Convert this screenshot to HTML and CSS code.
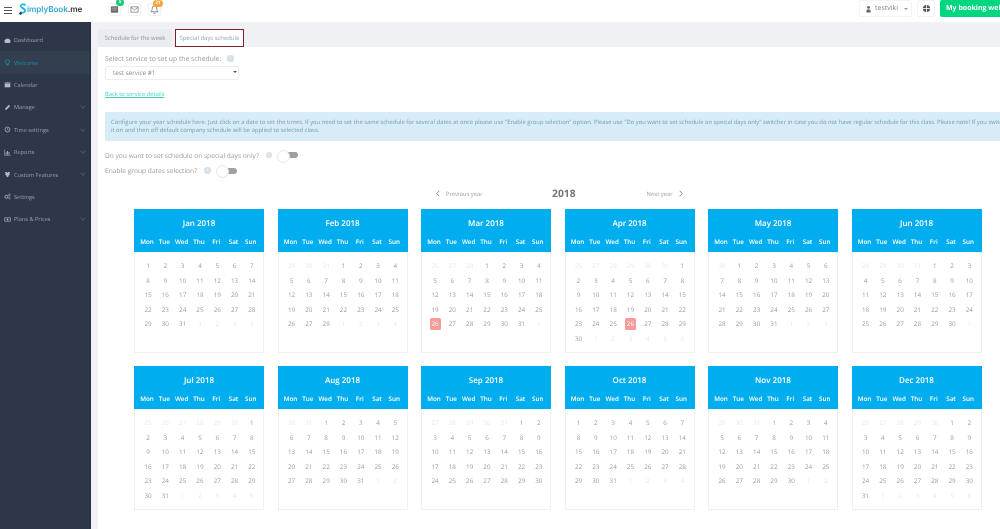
FILE: index.html
```html
<!DOCTYPE html>
<html lang="en">
<head>
<meta charset="utf-8">
<title>SimplyBook.me</title>
<link rel="stylesheet" href="styles.css">
</head>
<body>
<div class="app">
  <header class="top">
    <div class="burger"><span></span><span></span><span></span></div>
    <div class="logo"><svg class="logo-mark" viewBox="0 0 8 12"><path d="M6.500 2.200C5.600 1.200 2 1 1.600 3c-.4 2 4.600 2.300 4.600 4.600C6.200 9.600 3 10.400 1.200 8.800" fill="none" stroke="#19b5ee" stroke-width="1.800"/><circle cx="1.500" cy="10.500" r="1.200" fill="#222"/></svg><span class="logo-text">implyBook<b>.me</b></span></div>
    <div class="top-icons">
      <div class="ibox"><svg viewBox="0 0 10 10"><path d="M1 1.500h8v7H1z" fill="#666"/><path d="M2 3.500h6M2 5.500h6" stroke="#ddd" stroke-width=".6"/></svg><span class="badge green">5</span></div>
      <div class="ibox"><svg viewBox="0 0 10 10"><path d="M1 2h8v6H1zM1 2.500l4 3 4-3" fill="none" stroke="#777" stroke-width=".8"/></svg></div>
      <div class="ibox"><svg viewBox="0 0 10 10"><path d="M5 1a2.500 2.500 0 0 0-2.500 2.500c0 2.500-1 3.500-1.500 4h8c-.5-.5-1.500-1.500-1.500-4A2.500 2.500 0 0 0 5 1zM4 8.500a1 1 0 0 0 2 0" fill="none" stroke="#666" stroke-width=".8"/></svg><span class="badge orange">21</span></div>
    </div>
    <div class="top-right">
      <div class="user"><svg viewBox="0 0 10 10"><circle cx="5" cy="2.800" r="2" fill="#666"/><path d="M1.800 10c0-3 1-4.500 3.200-4.500S8.200 7 8.200 10z" fill="#666"/></svg><span>testviki</span><i class="caret"></i></div>
      <div class="globe"><svg viewBox="0 0 10 10"><circle cx="5" cy="5" r="4" fill="#555"/><path d="M1 5h8M5 1v8" stroke="#fff" stroke-width=".9"/></svg></div>
      <div class="book">My booking website</div>
    </div>
  </header>
  <div class="body">
    <nav class="side">
      <a class="item"><svg viewBox="0 0 10 10"><path d="M1 8.500V4.500L3 2.500h4l2 2v4z" fill="#b5bcc4"/></svg>Dashboard</a>
      <a class="item active"><svg viewBox="0 0 10 10"><path d="M5 .8a2.800 2.800 0 0 0-1.500 5.200v1.500h3V6A2.800 2.800 0 0 0 5 .8zM3.800 8.500h2.400" fill="none" stroke="#0f9ccb" stroke-width="1"/></svg>Welcome</a>
      <a class="item"><svg viewBox="0 0 10 10"><path d="M1 2h8v7H1z" fill="#b5bcc4"/><path d="M1 3.800h8M3 1v2M7 1v2" stroke="#2d3748" stroke-width=".6"/></svg>Calendar</a>
      <a class="item more"><svg viewBox="0 0 10 10"><path d="M1.500 8.500l.7-2.500L7 1.200 8.800 3 4 7.800z" fill="#b5bcc4"/></svg>Manage</a>
      <a class="item more"><svg viewBox="0 0 10 10"><circle cx="5" cy="5" r="3.500" fill="none" stroke="#b5bcc4" stroke-width="1.100"/><path d="M5 3v2.200h1.800" fill="none" stroke="#b5bcc4" stroke-width=".8"/></svg>Time settings</a>
      <a class="item more"><svg viewBox="0 0 10 10"><path d="M1 1v8h8.500" fill="none" stroke="#b5bcc4" stroke-width=".8"/><path d="M2.500 5h1.200v3H2.500zM4.500 3h1.200v5H4.500zM6.500 4.200h1.200V8H6.500z" fill="#b5bcc4"/></svg>Reports</a>
      <a class="item more"><svg viewBox="0 0 10 10"><path d="M1.500 1.500h2.500L5 2.800l1-1.300h2.500L7.500 4.500 9 5.500 6.500 6.500V8L5 9 3.500 8V6.500L1 5.500l1.500-1z" fill="#b5bcc4"/></svg>Custom Features</a>
      <a class="item"><svg viewBox="0 0 10 10"><circle cx="3.500" cy="5.500" r="2.200" fill="none" stroke="#b5bcc4" stroke-width="1.200"/><circle cx="7.800" cy="2.800" r="1.200" fill="none" stroke="#b5bcc4" stroke-width=".9"/><circle cx="7.800" cy="7.500" r="1" fill="none" stroke="#b5bcc4" stroke-width=".8"/></svg>Settings</a>
      <a class="item more"><svg viewBox="0 0 10 10"><path d="M.8 2.500h8.400v5H.8z" fill="none" stroke="#b5bcc4" stroke-width=".9"/><circle cx="5" cy="5" r="1.300" fill="#b5bcc4"/></svg>Plans &amp; Prices</a>
    </nav>
    <main class="main">
      <div class="tabs">
        <div class="tab">Schedule for the week</div>
        <div class="tab current">Special days schedule</div>
      </div>
      <section class="panel">
        <label class="lead">Select service to set up the schedule:<i class="info">i</i></label>
        <div class="select">test service #1<i class="arrow"></i></div>
        <a class="back">Back to service details</a>
        <div class="alert">Configure your year schedule here. Just click on a date to set the times. If you need to set the same schedule for several dates at once please use "Enable group selection" option. Please use "Do you want to set schedule on special days only" switcher in case you do not have regular schedule for this class. Please note! If you switch<br>it on and then off default company schedule will be applied to selected class.</div>
        <div class="opt">Do you want to set schedule on special days only?<i class="info">i</i><span class="toggle"></span></div>
        <div class="opt second">Enable group dates selection?<i class="info">i</i><span class="toggle"></span></div>
        <div class="year-nav">
          <a class="nav-link"><svg viewBox="0 0 6 10"><path d="M5 1L1 5l4 4" fill="none" stroke="#66789a" stroke-width="1.300"/></svg>Previous year</a>
          <strong>2018</strong>
          <a class="nav-link">Next year<svg viewBox="0 0 6 10"><path d="M1 1l4 4-4 4" fill="none" stroke="#66789a" stroke-width="1.300"/></svg></a>
        </div>
        <div class="months" id="months"></div>
      </section>
    </main>
  </div>
</div>
<script src="app.js"></script>
</body>
</html>
```
FILE: styles.css
```css
* { box-sizing: border-box; }
html, body { margin: 0; height: 100%; overflow: hidden; }
body { font-family: "Open Sans", sans-serif; color: #888; background: #fff; text-rendering: geometricPrecision; }
.app { width: 1000px; height: 529px; display: flex; flex-direction: column; overflow: hidden; filter: blur(.4px); }

.top { height: 22px; flex: none; display: flex; align-items: flex-start; background: #fff; position: relative; }
.burger { width: 8px; margin: 7px 0 0 4px; display: flex; flex-direction: column; gap: 1.500px; }
.burger span { height: 1.300px; background: #555; }
.logo { display: flex; align-items: center; margin: 3px 0 0 7px; width: 65px; height: 12px; }
.logo-mark { width: 8px; height: 12px; flex: none; }
.logo-text { font-family: "Inter", sans-serif; font-size: 8.200px; font-weight: 600; color: #39a9d8; letter-spacing: -.1px; }
.logo-text b { color: #333; font-weight: 600; }
.top-icons { display: flex; gap: 7px; margin: 3px 0 0 24px; }
.ibox { width: 13px; height: 13px; border: 1px solid #f0f0f0; border-radius: 2px; position: relative; display: flex; align-items: center; justify-content: center; }
.ibox svg { width: 9px; height: 9px; }
.badge { position: absolute; top: -5px; right: -4px; min-width: 8px; height: 7px; border-radius: 4px; font-size: 4.500px; line-height: 7px; text-align: center; color: #fff; font-weight: 700; }
.badge.green { background: #14cc7c; }
.badge.orange { background: #f6a63a; right: -3px; top: -4px; min-width: 10px; }
.top-right { margin-left: auto; display: flex; gap: 5px; height: 17px; width: 141px; flex: none; }
.user { width: 53px; flex: none; height: 17px; border: 1px solid #f3f3f3; border-radius: 2px; display: flex; align-items: center; padding-left: 5px; font-size: 7px; gap: 3px; color: #888; }
.user svg { width: 7px; height: 8px; }
.caret { margin-left: 3px; border: 2px solid transparent; border-top: 2px solid #999; border-bottom: 0; }
.globe { width: 18px; flex: none; border: 1px solid #f3f3f3; border-radius: 2px; display: flex; align-items: center; justify-content: center; }
.globe svg { width: 9px; height: 9px; }
.book { flex: none; width: 90px; background: #00d67d; border-radius: 2px 0 0 2px; color: #fff; font-weight: 700; font-size: 7px; line-height: 17px; padding-left: 6px; white-space: nowrap; }

.body { flex: 1; display: flex; min-height: 0; }
.side { width: 91px; flex: none; background: #2e3749; padding-top: 7px; border-right: 1px solid #262e3d; }
.item { display: flex; align-items: center; height: 22.400px; padding-left: 4px; gap: 3px; font-size: 5.600px; color: #99a1ac; position: relative; }
.item svg { width: 7px; height: 7px; flex: none; }
.item.active { background: #333f4e; color: #0f93c0; }
.item.more::after { content: ""; position: absolute; left: 81px; top: 8px; width: 3px; height: 3px; border: solid #4c5668; border-width: 0 1px 1px 0; transform: rotate(45deg); }

.main { flex: 1; min-width: 0; background: #eff1f5; padding: 7px 0 0 7px; display: flex; flex-direction: column; }
.tabs { display: flex; height: 18px; flex: none; gap: 3px; }
.tab { width: 74px; background: #eaecef; font-size: 5.900px; line-height: 19px; text-align: center; color: #8493a8; }
.tab.current { width: 69px; background: #fff; border: 1px solid #7f2128; line-height: 17px; color: #8a9dbb; }

.panel { flex: 1; background: #fff; padding: 7px 0 0 7px; min-height: 0; overflow: hidden; }
.lead { display: flex; align-items: center; height: 9px; font-size: 6.800px; color: #9a9a9a; }
.info { display: inline-block; width: 6.500px; height: 6.500px; border-radius: 50%; background: #d5e0e8; color: #fff; font-size: 5px; line-height: 6.500px; text-align: center; font-style: normal; margin-left: 6px; flex: none; }
.select { width: 134px; height: 14px; margin-top: 3px; border: 1px solid #eee; border-radius: 2px; font-size: 6.300px; line-height: 12px; padding-left: 7px; color: #888; position: relative; }
.arrow { position: absolute; right: 1.500px; top: 4px; border: 2px solid transparent; border-top: 2.500px solid #555; border-bottom: 0; }
.back { display: block; margin-top: 10px; height: 9px; font-size: 5.800px; line-height: 9px; color: #3fd0c4; text-decoration: underline; }
.alert { width: 1100px; height: 29px; margin-top: 13px; background: #d8ecf7; padding: 6px 0 0 6px; font-size: 5.850px; line-height: 8px; color: #6b9db1; white-space: nowrap; border-radius: 1px; }
.opt { display: flex; align-items: center; height: 12px; margin-top: 8px; font-size: 6.650px; color: #9a9a9a; }
.opt.second { margin-top: 3.500px; }
.opt .info { margin-left: 7px; }
.toggle { height: 6px; background: #a0a0a0; border-radius: 3px; position: relative; flex: none; width: 16px; margin-left: 10px; }
.toggle::before { content: ""; position: absolute; left: -5px; top: -2.500px; width: 11px; height: 11px; background: #fff; border: 1px solid #e6e6e6; border-radius: 50%; }
.year-nav { display: flex; align-items: center; justify-content: space-between; width: 244px; height: 12px; margin: 11px 0 0 331px; }
.nav-link { display: flex; align-items: center; gap: 6px; font-size: 5.800px; color: #96a1b1; width: 116px; white-space: nowrap; flex: none; }
.nav-link:last-child { justify-content: flex-end; width: 107px; }
.nav-link svg { width: 4px; height: 7px; flex: none; }
.year-nav strong { font-size: 10.300px; color: #777; font-weight: 700; }
.months { display: grid; grid-template-columns: repeat(6, 130px); column-gap: 13.500px; row-gap: 13px; margin: 9px 0 0 29px; width: 860px; }
.month { height: 144px; border: 1px solid #eef0f2; border-top: 0; }
.month-head { height: 43px; margin: 0 -1px; background: #00adee; color: #fff; text-align: center; padding-top: 9.500px; }
.month-name { font-size: 8px; font-weight: 600; line-height: 11px; }
.week, .days { display: grid; grid-template-columns: repeat(7, 17.300px); padding-left: 4.400px; text-align: center; }
.week { margin-top: 8px; font-size: 6.300px; font-weight: 600; line-height: 9px; }
.days { margin-top: 7.500px; font-size: 6.300px; color: #9c9c9c; grid-auto-rows: 14.600px; line-height: 14.600px; }
.days .m { color: #e8e8e8; }
.days .hit { background: #f79a9a; color: #fff; width: 11px; height: 12px; line-height: 12px; margin: 1px auto 0; border-radius: 1.500px; }
```
FILE: app.js
```js
var MONTHS = ["Jan","Feb","Mar","Apr","May","Jun","Jul","Aug","Sep","Oct","Nov","Dec"];
var WEEK = ["Mon","Tue","Wed","Thu","Fri","Sat","Sun"];
var HIT = { "2-26": true, "3-26": true };
var html = "";
MONTHS.forEach(function (name, m) {
  var lead = (new Date(2018, m, 1).getDay() + 6) % 7;
  var len = new Date(2018, m + 1, 0).getDate();
  var prev = new Date(2018, m, 0).getDate();
  var cells = "";
  for (var i = lead; i > 0; i--) cells += '<span class="m">' + (prev - i + 1) + "</span>";
  for (var d = 1; d <= len; d++) cells += (HIT[m + "-" + d] ? '<span class="hit">' : "<span>") + d + "</span>";
  var tail = (7 - (lead + len) % 7) % 7;
  for (var t = 1; t <= tail; t++) cells += '<span class="m">' + t + "</span>";
  html += '<article class="month"><div class="month-head"><div class="month-name">' + name + ' 2018</div><div class="week">' +
    WEEK.map(function (w) { return "<span>" + w + "</span>"; }).join("") +
    '</div></div><div class="days">' + cells + "</div></article>";
});
document.getElementById("months").innerHTML = html;
```
